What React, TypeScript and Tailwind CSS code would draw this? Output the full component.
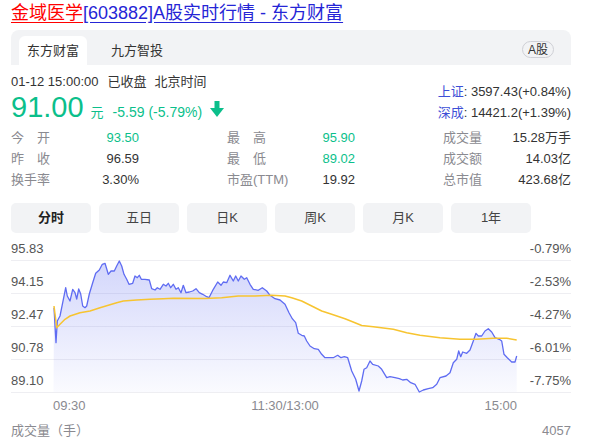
import React from 'react';

const BLUE_PTS =
  '54,306.7 56,341.7 57.3,320 60,315 62.7,301.7 65.7,286.7 67.3,295 70,300 72.7,288.3 75,291.7 76.7,298 78.7,288 80.7,293 82.7,305 85,306.7 86.7,305 89.3,293 92.7,281.7 95.7,272.3 99.3,269 102.3,263.3 105,262.3 108.3,273.3 111,270 114.3,270 116.7,265 119.3,260 121.7,265 124,273.3 126.7,278.3 129,283.3 132.7,282.3 135,275 137.3,276.7 139.3,274.3 141.3,278.3 145,278.3 149.3,279 151.7,287.7 155,289 157.3,286.7 160,288.3 163.3,283.3 166,285 168.3,282.3 170.7,286.7 173.3,283.3 176,288.3 178.3,286.7 181,291.7 183.3,284.3 186,291.7 189.3,291 192.7,290 196,287.7 199.3,291.7 202.7,293.3 206.7,295.7 209,296.7 213.3,288.3 217.7,281 221,284.3 223.3,281 226.7,281.7 230,274.3 233.3,280 235.7,275 238.3,280 241,275 244.3,278.3 246.7,276.7 250,283.3 253.3,288.3 258.3,289.3 262.3,286.7 266.7,290 270,294.3 275,297.7 280,299 285,303.3 289,311.7 292.3,317.7 295.7,321.7 298.3,332.3 301.7,334.3 304.3,335 306.7,340 310,345 314.3,347.7 318.3,348.3 321.7,353.3 325,356.7 330,356.7 333.3,356.7 337.7,354.3 341,356.7 344.3,355.7 347.7,356.7 351.7,370 355.7,378.3 359,390 361.7,380 364,368.3 366.7,366.7 370,360 372.7,363.3 378.3,365 381.7,368.3 386.7,376.7 390,375.7 395,376.7 399.3,377.7 402.7,379 406.7,378.3 410.7,381.7 415,383.3 419.3,391 423.3,389 428.3,387.7 432.7,386.7 436.7,383.3 440,376.7 446,375 450,371.7 453.3,361.7 456.7,358.3 458.7,350 460.7,355.7 462.7,351 466.7,352.3 470,349 473.3,340 476,332.3 478.3,335 481.7,335 485,330 488.3,327.7 491.7,331 495,336.7 499.3,338.3 501.7,340 504,353.3 507.3,356.7 511.7,361 515,361 516.7,355';

const AVG_PTS =
  '54,305 56.7,326.7 60,323.3 65,318.3 70,315 80,311.7 90,310 100,306.7 108.3,304.3 116.7,301.7 123.3,300 136.7,299 150,298.3 163.3,297.7 173.3,297.3 205,297.5 221.7,296.7 238.3,295 255,295 271.7,294.3 285,295 291.7,296.7 301.7,300 311.7,305 321.7,310 331.7,313.3 345,317.7 355,321.7 361.7,324.5 373.3,325.7 393.3,328.3 406.7,331.7 420,334.3 440,336.7 460,338.3 476.7,338.3 493.3,337.3 506.7,337.3 516.7,339';

const stats = [
  [
    { label: ['今', '开'], value: '93.50', green: true },
    { label: ['昨', '收'], value: '96.59' },
    { label: ['换手率'], value: '3.30%' },
  ],
  [
    { label: ['最', '高'], value: '95.90', green: true },
    { label: ['最', '低'], value: '89.02', green: true },
    { label: ['市盈(TTM)'], value: '19.92' },
  ],
  [
    { label: ['成交量'], value: '15.28万手' },
    { label: ['成交额'], value: '14.03亿' },
    { label: ['总市值'], value: '423.68亿' },
  ],
];

const periods = ['分时', '五日', '日K', '周K', '月K', '1年'];

const axis = [
  ['95.83', '-0.79%'],
  ['94.15', '-2.53%'],
  ['92.47', '-4.27%'],
  ['90.78', '-6.01%'],
  ['89.10', '-7.75%'],
];

export default function App() {
  return (
    <div className="w-[595px] h-[444px] overflow-hidden bg-white font-['Liberation_Sans','Noto_Sans_CJK_SC',sans-serif] text-[#333]">
      <div className="pl-[11px] pr-[24px]">
        {/* Title */}
        <div className="h-[30px] text-[18px] leading-[26px] whitespace-nowrap">
          <span className="text-[#f00] underline underline-offset-[3px]">金域医学</span>
          <span className="text-[#2525d6] underline underline-offset-[3px]">[603882]A股实时行情 - 东方财富</span>
        </div>

        {/* Source tabs */}
        <div className="h-[35px] bg-[#f2f3f5] rounded-t-[8px] flex items-end justify-between px-2">
          <div className="flex items-end">
            <div className="w-[68px] h-[29px] bg-white rounded-t-[6px] flex items-center justify-center text-[13px]">东方财富</div>
            <div className="ml-4 w-[68px] h-[29px] flex items-center justify-center text-[13px]">九方智投</div>
          </div>
          <div className="mb-[7px] mr-[9px] h-[17px] px-[5px] rounded-full border border-[#cfd0d6] text-[12px] leading-[14px] flex items-center">A股</div>
        </div>

        {/* Quote */}
        <div className="mt-[8px] flex justify-between">
          <div>
            <div className="text-[13px] leading-[18px] whitespace-nowrap">
              01-12 15:00:00<span className="ml-[9px]">已收盘</span><span className="ml-2">北京时间</span>
            </div>
            <div className="mt-[1.5px] h-[29px] flex items-baseline text-[#0bbf8b] whitespace-nowrap">
              <span className="text-[29px] leading-[29px]">91.00</span>
              <span className="ml-[7px] text-[13px]">元</span>
              <span className="ml-[9px] text-[14px]">-5.59 (-5.79%)</span>
              <svg className="ml-[8px] self-center mt-[4px]" width="14" height="16" viewBox="0 0 14 16">
                <rect x="4.5" y="0" width="5" height="8" fill="#0bbf8b" />
                <polygon points="0,7 14,7 7,16" fill="#0bbf8b" />
              </svg>
            </div>
          </div>
          <div className="mt-[7.5px] text-[13px] leading-[21px] text-right whitespace-nowrap">
            <div><span className="text-[#3d4fd6]">上证</span>: 3597.43(+0.84%)</div>
            <div><span className="text-[#3d4fd6]">深成</span>: 14421.2(+1.39%)</div>
          </div>
        </div>

        {/* Stats */}
        <div className="mt-[5px] flex justify-between text-[13px]">
          {stats.map((col, ci) => (
            <div key={ci} className="w-[128px]">
              {col.map((s, i) => (
                <div key={i} className="h-[21px] flex items-center justify-between whitespace-nowrap">
                  {s.label.length === 2 ? (
                    <span className="w-[39px] flex justify-between text-[#8a8a90]">
                      <span>{s.label[0]}</span>
                      <span>{s.label[1]}</span>
                    </span>
                  ) : (
                    <span className="text-[#8a8a90]">{s.label[0]}</span>
                  )}
                  <span className={s.green ? 'text-[#0bbf8b]' : 'text-[#333]'}>{s.value}</span>
                </div>
              ))}
            </div>
          ))}
        </div>

        {/* Periods */}
        <div className="mt-[12.5px] flex gap-2">
          {periods.map((p, i) => (
            <div
              key={p}
              className={
                'w-[80px] h-[30px] rounded-[5px] bg-[#f2f3f5] flex items-center justify-center text-[13px] ' +
                (i === 0 ? 'font-bold text-[#222]' : 'text-[#444]')
              }
            >
              {p}
            </div>
          ))}
        </div>

        {/* Chart */}
        <div className="relative">
          <div className="text-[13px] text-[#555]">
            {axis.map(([l, r], i) => (
              <div
                key={l}
                className={
                  'flex items-end justify-between border-b border-[#eeeef2] pb-[4px] leading-[15px] ' +
                  (i === 0 ? 'h-[27.5px]' : 'h-[33.1px]')
                }
              >
                <span>{l}</span>
                <span>{r}</span>
              </div>
            ))}
          </div>
          <svg className="absolute left-0 top-0" width="560" height="165" viewBox="0 0 560 165">
            <defs>
              <linearGradient id="fillG" x1="0" y1="259" x2="0" y2="392" gradientUnits="userSpaceOnUse">
                <stop offset="0" stopColor="#6a76f2" stopOpacity="0.3" />
                <stop offset="1" stopColor="#6a76f2" stopOpacity="0.03" />
              </linearGradient>
            </defs>
            <g transform="translate(-11,-232)">
              <polygon points={`53.5,391 ${BLUE_PTS} 516.7,391`} fill="url(#fillG)" />
              <polyline points={BLUE_PTS} fill="none" stroke="#5f6cf2" strokeWidth="1.3" strokeLinejoin="round" />
              <polyline points={AVG_PTS} fill="none" stroke="#f7c430" strokeWidth="1.5" strokeLinejoin="round" />
            </g>
          </svg>
        </div>

        {/* Time axis */}
        <div className="ml-[42px] w-[464px] h-[26px] flex items-center justify-between text-[13px] text-[#8a8a90]">
          <span>09:30</span>
          <span>11:30/13:00</span>
          <span>15:00</span>
        </div>

        {/* Volume */}
        <div className="h-[24px] flex items-center justify-between text-[13px] text-[#8a8a90]">
          <span>成交量（手）</span>
          <span>4057</span>
        </div>
        <div className="ml-[45px] mt-[1px] w-[1px] h-[3px] bg-[#0bbf8b]" />
      </div>
    </div>
  );
}
